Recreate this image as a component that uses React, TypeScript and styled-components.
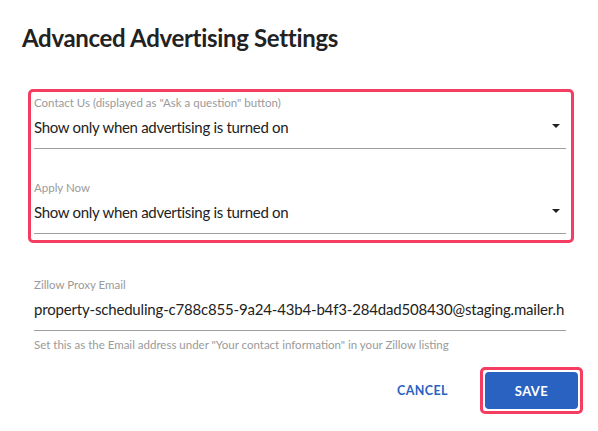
import React from "react";
import styled, { createGlobalStyle } from "styled-components";

const Global = createGlobalStyle`
  html, body { margin: 0; padding: 0; background: #ffffff; }
  body { font-family: Lato, "Open Sans", sans-serif; color: #222222; }
  * { box-sizing: border-box; }
`;

const Dialog = styled.div`
  width: 598px;
  height: 431px;
  background: #ffffff;
  padding: 23px 0 0 22px;
  display: flex;
  flex-direction: column;
`;

const Title = styled.h2`
  margin: 0;
  font-family: Lato, sans-serif;
  font-weight: 700;
  font-size: 24px;
  line-height: 29px;
  color: #222222;
  letter-spacing: -0.32px;
`;

const Highlight = styled.div`
  margin: 37px 0 0 6px;
  width: 546px;
  border: 3px solid #f53d62;
  border-radius: 5px;
  padding: 3px 3px 6px 3px;
  display: flex;
  flex-direction: column;
  gap: 31px;
`;

const Field = styled.div`
  width: 532px;
  display: flex;
  flex-direction: column;
`;

const Label = styled.div`
  font-size: 11.5px;
  line-height: 16px;
  color: #9a9a9a;
  white-space: nowrap;
`;

const Control = styled.div<{ $padRight?: number }>`
  display: flex;
  align-items: center;
  justify-content: space-between;
  margin-top: 6px;
  padding: 0 ${(p) => p.$padRight ?? 6}px 11px 0;
  border-bottom: 1px solid #9e9e9e;
`;

const Value = styled.div<{ $spacing?: number }>`
  font-size: 15px;
  line-height: 20px;
  letter-spacing: ${(p) => p.$spacing ?? -0.3}px;
  color: #222222;
  white-space: nowrap;
  overflow: hidden;
  flex: 1;
`;

const Arrow = styled.svg`
  width: 8px;
  height: 4px;
  flex: none;
  margin-top: -2px;
`;

const Helper = styled.div`
  margin-top: 7px;
  font-size: 11.5px;
  line-height: 14px;
  color: #9a9a9a;
  white-space: nowrap;
`;

const Lower = styled.div`
  margin: 34px 0 0 12px;
  display: flex;
  flex-direction: column;
`;

const Actions = styled.div`
  margin-top: 15px;
  width: 561px;
  display: flex;
  justify-content: flex-end;
  align-items: center;
  gap: 18px;
`;

const TextButton = styled.button`
  background: none;
  border: none;
  padding: 8px 14px;
  font-family: Lato, sans-serif;
  font-weight: 700;
  font-size: 12.5px;
  letter-spacing: 0.4px;
  text-transform: uppercase;
  color: #2a62c2;
  cursor: pointer;
`;

const Ring = styled.div`
  border: 3px solid #f53d62;
  border-radius: 5px;
  padding: 2px;
  display: flex;
`;

const PrimaryButton = styled.button`
  width: 93px;
  height: 37px;
  border: none;
  border-radius: 4px;
  background: #2962c1;
  color: #ffffff;
  font-family: Lato, sans-serif;
  font-weight: 700;
  font-size: 13px;
  letter-spacing: 0.4px;
  text-transform: uppercase;
  cursor: pointer;
`;

const DropArrow = () => (
  <Arrow viewBox="0 0 8 4">
    <path d="M0 0 L8 0 L4 4 Z" fill="#222222" />
  </Arrow>
);

const SelectField = ({ label, value }: { label: string; value: string }) => (
  <Field>
    <Label>{label}</Label>
    <Control>
      <Value>{value}</Value>
      <DropArrow />
    </Control>
  </Field>
);

export default function App() {
  return (
    <>
      <Global />
      <Dialog>
        <Title>Advanced Advertising Settings</Title>
        <Highlight>
          <SelectField
            label={'Contact Us (displayed as "Ask a question" button)'}
            value="Show only when advertising is turned on"
          />
          <SelectField
            label="Apply Now"
            value="Show only when advertising is turned on"
          />
        </Highlight>
        <Lower>
          <Field>
            <Label>Zillow Proxy Email</Label>
            <Control $padRight={0}>
              <Value $spacing={-0.18}>
                property-scheduling-c788c855-9a24-43b4-b4f3-284dad508430@staging.mailer.h
              </Value>
            </Control>
            <Helper>
              Set this as the Email address under "Your contact information" in your Zillow listing
            </Helper>
          </Field>
        </Lower>
        <Actions>
          <TextButton>Cancel</TextButton>
          <Ring>
            <PrimaryButton>Save</PrimaryButton>
          </Ring>
        </Actions>
      </Dialog>
    </>
  );
}
